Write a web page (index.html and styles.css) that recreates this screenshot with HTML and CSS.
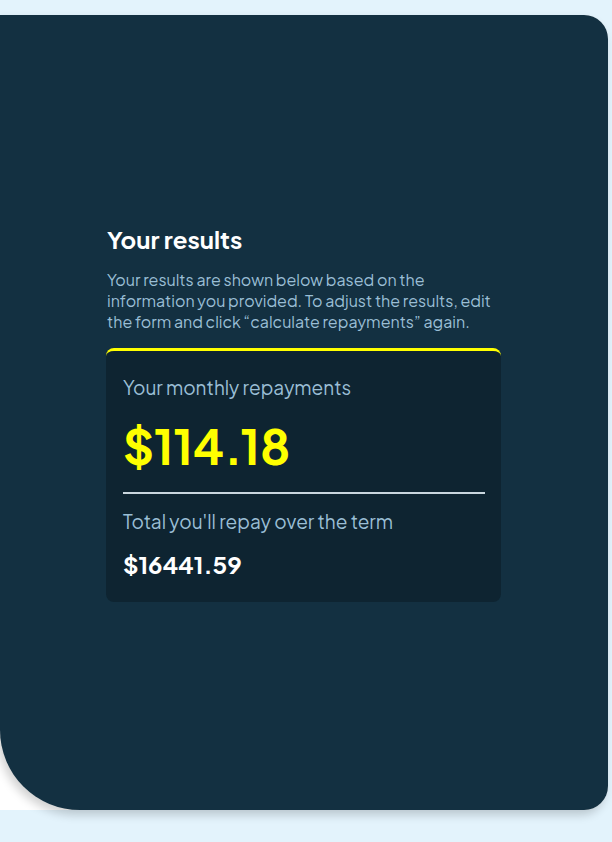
FILE: index.html
```html
<!DOCTYPE html>
<html lang="en">
<head>
<meta charset="utf-8">
<title>Your results</title>
<link rel="stylesheet" href="styles.css">
</head>
<body>
<div class="shell">
  <section class="panel">
    <div class="results">
      <h2 class="title">Your results</h2>
      <p class="intro">Your results are shown below based on the information you provided. To adjust the results, edit the form and click “calculate repayments” again.</p>
      <div class="card">
        <p class="label">Your monthly repayments</p>
        <p class="monthly">$114.18</p>
        <hr class="divider">
        <p class="label">Total you'll repay over the term</p>
        <p class="total">$16441.59</p>
      </div>
    </div>
  </section>
</div>
</body>
</html>
```

FILE: styles.css
```css
html, body {
  margin: 0;
  padding: 0;
}
body {
  background: #e3f3fc;
  font-family: "Plus Jakarta Sans", Inter, "Noto Sans", sans-serif;
  width: 612px;
  height: 842px;
  overflow: hidden;
}
.shell {
  margin-top: 15px;
  width: 608px;
  height: 795px;
  background: #ffffff;
  border-radius: 0 24px 24px 0;
}
.panel {
  height: 100%;
  box-sizing: border-box;
  background: #133041;
  border-radius: 0 24px 24px 80px;
  box-shadow: -3px 5px 10px rgba(0, 0, 0, 0.18);
  display: flex;
  align-items: center;
  padding-left: 106px;
  padding-top: 4px;
}
.results {
  width: 395px;
}
.title {
  margin: 0 0 0 1px;
  color: #ffffff;
  font-size: 24px;
  font-weight: 700;
  line-height: 25px;
}
.intro {
  margin: 17px 0 16px 1px;
  color: #9abed5;
  font-size: 16px;
  font-weight: 400;
  line-height: 21px;
}
.card {
  background: #0e2431;
  border-top: 3px solid #ffff00;
  border-radius: 8px;
  padding: 24px 16px 24px 17px;
}
.label {
  margin: 0;
  color: #9abed5;
  font-size: 19px;
  font-weight: 400;
  line-height: 24px;
}
.monthly {
  margin: 15px 0 0;
  color: #ffff00;
  font-size: 48px;
  font-weight: 700;
  line-height: 64px;
}
.divider {
  border: 0;
  border-top: 2px solid #c9d6de;
  margin: 14px 0 15px;
}
.total {
  margin: 17px 0 0;
  color: #ffffff;
  font-size: 24px;
  font-weight: 700;
  line-height: 28px;
}
```
